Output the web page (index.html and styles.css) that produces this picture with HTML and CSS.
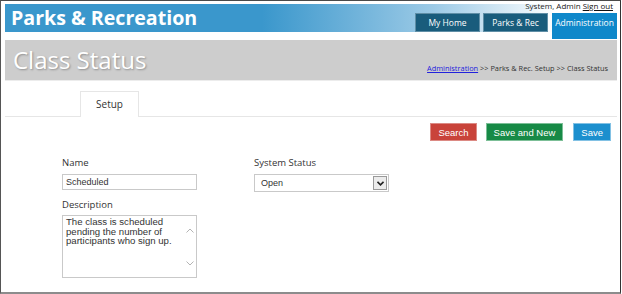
FILE: index.html
```html
<!DOCTYPE html>
<html lang="en">

<head>
    <meta charset="UTF-8">
    <meta name="viewport" content="width=device-width, initial-scale=1.0">
    <title>Class Status</title>
    <link rel="stylesheet" href="styles.css">
</head>

<body>
    <div class="frame">
        <div class="page">
            <header class="topbar">
                <div class="brand">Parks &amp; Recreation</div>
                <div class="topright">
                    <div class="user">System, Admin <a href="#">Sign out</a></div>
                    <nav class="tabs">
                        <a class="tab" href="#">My Home</a>
                        <a class="tab" href="#">Parks &amp; Rec</a>
                        <a class="tab active" href="#">Administration</a>
                    </nav>
                </div>
            </header>

            <div class="titlebar">
                <h1>Class Status</h1>
                <div class="crumbs"><a href="#">Administration</a> &gt;&gt; Parks &amp; Rec. Setup &gt;&gt; Class Status</div>
            </div>

            <div class="tabstrip">
                <div class="subtab">Setup</div>
            </div>

            <div class="actions">
                <button class="btn search">Search</button>
                <button class="btn savenew">Save and New</button>
                <button class="btn save">Save</button>
            </div>

            <div class="form">
                <div class="col">
                    <label class="lbl">Name</label>
                    <input class="field" type="text" value="Scheduled">
                    <label class="lbl desc">Description</label>
                    <div class="area">
                        <textarea class="field multi">The class is scheduled pending the number of participants who sign up.</textarea>
                        <span class="scroll">
                            <svg width="8" height="5" viewBox="0 0 8 5"><path d="M0.5 4.5 L4 1 L7.5 4.5" fill="none" stroke="#b4b4b4" stroke-width="1"/></svg>
                            <svg width="8" height="5" viewBox="0 0 8 5"><path d="M0.5 0.5 L4 4 L7.5 0.5" fill="none" stroke="#b4b4b4" stroke-width="1"/></svg>
                        </span>
                    </div>
                </div>
                <div class="col">
                    <label class="lbl">System Status</label>
                    <div class="select">
                        <span>Open</span>
                        <span class="drop">
                            <svg width="7" height="5" viewBox="0 0 7 5"><path d="M0.5 0.8 L3.5 3.8 L6.5 0.8" fill="none" stroke="#222" stroke-width="1.6"/></svg>
                        </span>
                    </div>
                </div>
            </div>
        </div>
    </div>
</body>

</html>
```

FILE: styles.css
```css
body {
    margin: 0;
    background-color: #fff;
    font-family: 'Open Sans', 'Noto Sans', sans-serif;
    color: #333;
}

.frame {
    box-sizing: border-box;
    width: 621px;
    height: 294px;
    border-top: 1px solid #4a4a4a;
    border-left: 1px solid #555;
    border-right: 1px solid #333;
    border-bottom: 2px solid #8c8c8c;
    background-color: #fff;
}

.page {
    padding: 0 3px 0 4px;
}

/* barra azul do topo */
.topbar {
    display: flex;
    justify-content: space-between;
    height: 28px;
    margin-top: 3px;
    margin-bottom: 8px;
    background: linear-gradient(to right, #3a97cc 0%, #3a97cc 42%, #9ccae6 70%, #ffffff 90%);
}

.brand {
    color: #fff;
    font-weight: 700;
    font-size: 19.6px;
    line-height: 28px;
    padding-left: 6px;
}

.topright {
    margin-top: -3px;
    display: flex;
    flex-direction: column;
    align-items: flex-end;
}

.user {
    font-size: 8px;
    line-height: 10px;
    color: #222;
    padding-right: 4px;
}

.user a {
    color: #111;
}

.tabs {
    display: flex;
    align-items: flex-start;
    gap: 3px;
    margin-top: 2px;
}

.tab {
    box-sizing: border-box;
    width: 65px;
    height: 19px;
    line-height: 17px;
    text-align: center;
    font-size: 8.5px;
    color: #fff;
    text-decoration: none;
    background-color: #195c7c;
    border: 1px solid #5f8ea6;
}

.tab.active {
    height: 26px;
    margin-left: 1px;
    background-color: #0f88ca;
    border-color: #0f88ca;
}

/* barra cinza do titulo */
.titlebar {
    display: flex;
    justify-content: space-between;
    align-items: flex-end;
    height: 40px;
    background-color: #cdcdcd;
    border-bottom: 1px solid #ececec;
}

.titlebar h1 {
    margin: 0;
    align-self: center;
    padding-left: 8px;
    font-weight: 400;
    font-size: 24px;
    line-height: 40px;
    color: #fff;
    text-shadow: 1px 1px 2px rgba(0, 0, 0, 0.3);
}

.crumbs {
    font-size: 7.4px;
    line-height: 10px;
    padding: 0 9px 7px 0;
    color: #333;
}

.crumbs a {
    color: #2222dd;
}

.tabstrip {
    margin-top: 10px;
    height: 25px;
    border-bottom: 1px solid #e6e6e6;
}

.subtab {
    box-sizing: border-box;
    width: 59px;
    height: 26px;
    margin-left: 75px;
    border: 1px solid #e6e6e6;
    border-bottom: none;
    background-color: #fff;
    font-size: 10px;
    line-height: 24px;
    text-align: center;
    color: #333;
}

.actions {
    display: flex;
    justify-content: flex-end;
    gap: 9px;
    padding: 6px 6px 0 0;
}

.btn {
    height: 18px;
    padding: 0 7px;
    font-family: 'Liberation Sans', Arial, sans-serif;
    font-size: 9.5px;
    color: #fff;
    border: 1px solid;
    cursor: pointer;
}

.btn.search {
    background-color: #c9433a;
    border-color: #dc8a84;
}

.btn.savenew {
    background-color: #178a46;
    border-color: #7cbf97;
}

.btn.save {
    margin-left: 1px;
    background-color: #1c8fce;
    border-color: #82c1e4;
}

/* formulario */
.form {
    display: flex;
    gap: 57px;
    padding: 15px 0 0 57px;
}

.col {
    width: 135px;
}

.lbl {
    display: block;
    font-size: 9.5px;
    line-height: 14px;
    margin-bottom: 4px;
    color: #333;
}

.lbl.desc {
    margin-top: 8px;
    margin-bottom: 3px;
}

.field {
    box-sizing: border-box;
    display: block;
    width: 135px;
    height: 16px;
    margin: 0;
    padding: 0 3px;
    border: 1px solid #c9c9c9;
    font-family: 'Liberation Sans', Arial, sans-serif;
    font-size: 9px;
    color: #333;
    outline: none;
}

.area {
    position: relative;
}

.field.multi {
    height: 63px;
    padding: 1px 14px 0 3px;
    font-size: 9.6px;
    line-height: 9.5px;
    resize: none;
    overflow: hidden;
}

.scroll {
    position: absolute;
    top: 13px;
    right: 3px;
    height: 38px;
    display: flex;
    flex-direction: column;
    justify-content: space-between;
}

.scroll svg {
    display: block;
}

.select {
    box-sizing: border-box;
    display: flex;
    justify-content: space-between;
    align-items: center;
    width: 135px;
    height: 18px;
    padding: 0 1px 0 6px;
    border: 1px solid #c9c9c9;
    font-family: 'Liberation Sans', Arial, sans-serif;
    font-size: 9px;
    color: #333;
}

.drop {
    box-sizing: border-box;
    display: flex;
    justify-content: center;
    align-items: center;
    width: 14px;
    height: 14px;
    border: 1px solid #9a9a9a;
    background-color: #ececec;
}
```
